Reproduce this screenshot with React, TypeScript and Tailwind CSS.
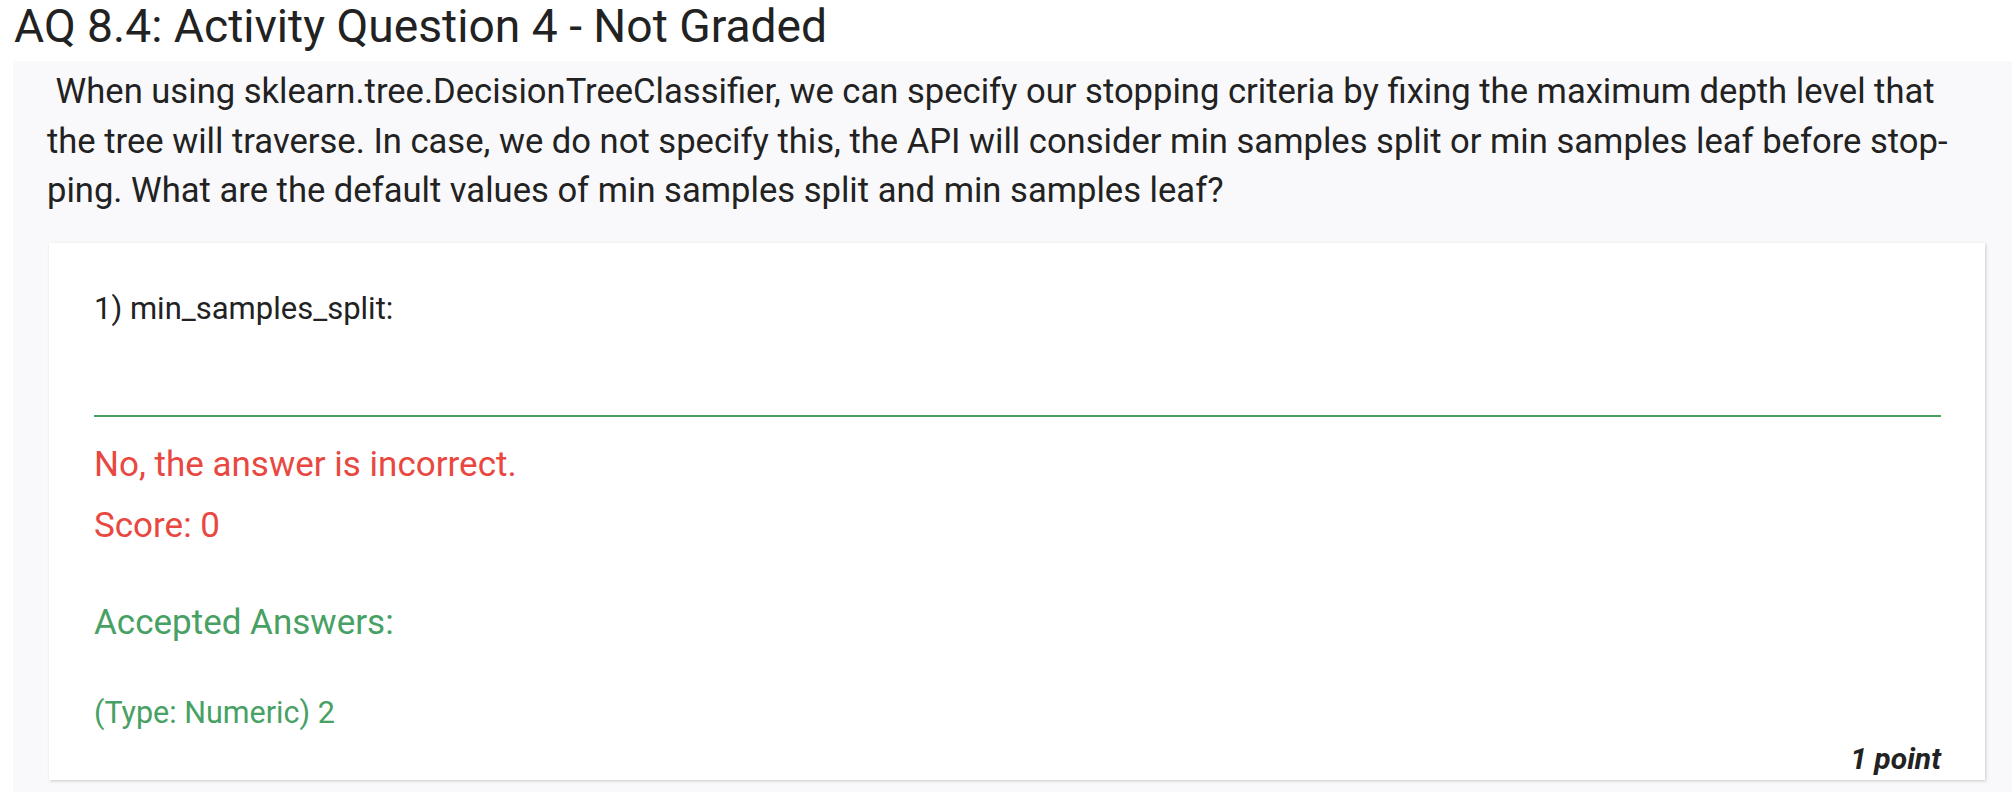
import React from "react";

const question =
  "When using sklearn.tree.DecisionTreeClassifier, we can specify our stopping criteria by fixing the maximum depth level that";

export default function App() {
  return (
    <div className="w-full h-[792px] overflow-hidden bg-white font-['Roboto','Liberation_Sans',sans-serif] text-[#222222]">
      {/* --- Heading --- */}
      <h1 className="pl-[14px] text-[46.2px] leading-[52px] font-normal mb-[9px]">
        AQ 8.4: Activity Question 4 - Not Graded
      </h1>

      {/* --- Question panel --- */}
      <div className="ml-[13px] bg-[#f9f9fb] pl-[34px] pt-[6px] pb-[13px]">
        <p className="text-[34.6px] leading-[49.5px] whitespace-nowrap">
          {"\u00a0"}
          {question}
          <br />
          the tree will traverse. In case, we do not specify this, the API will consider min samples split or min samples leaf before stop-
          <br />
          ping. What are the default values of min samples split and min samples leaf?
        </p>

        {/* Answer card */}
        <div className="mt-[27px] ml-[2px] mr-[27px] bg-white shadow-[1px_1px_3px_rgba(0,0,0,0.18)] pl-[45px] pr-[44px] pt-[46px] pb-[1px]">
          <div className="text-[31px] leading-[40px]">1) min_samples_split:</div>
          <div className="h-[88px] border-b-2 border-[#4a9f63]" />

          <div className="mt-[26px] text-[35px] leading-[44px] text-[#e8483f]">
            No, the answer is incorrect.
          </div>
          <div className="mt-[17px] text-[35px] leading-[44px] text-[#e8483f]">Score: 0</div>

          <div className="mt-[53px] text-[35px] leading-[44px] text-[#48a164]">Accepted Answers:</div>
          <div className="mt-[48px] text-[30.5px] leading-[40px] text-[#48a164]">(Type: Numeric) 2</div>

          <div className="mt-[6px] text-right text-[30px] leading-[40px] font-bold italic">1 point</div>
        </div>
      </div>
    </div>
  );
}
